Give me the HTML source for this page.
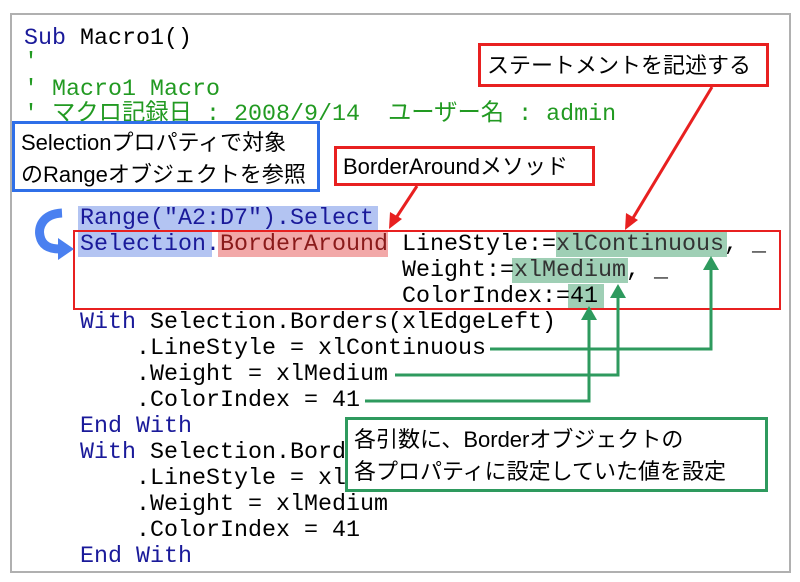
<!DOCTYPE html>
<html><head><meta charset="utf-8"><style>
body{margin:0;width:800px;height:582px;background:#fff;position:relative;overflow:hidden}
.frame{position:absolute;left:10px;top:13px;width:777px;height:556px;border:2px solid #b0b0b0}
.l{position:absolute;left:24px;font:23.33px/26px "Liberation Mono","Noto Sans CJK JP",monospace;white-space:pre;color:#000;letter-spacing:0}
.k{color:#1a1a9a}.c{color:#229a22}
.hl{position:absolute}
.box{position:absolute;background:#fff;font:22px/29px "Liberation Sans","Noto Sans CJK JP",sans-serif;color:#000;white-space:nowrap;box-sizing:border-box;padding:2px 6px}
</style></head><body>
<div class="frame"></div>
<div class="hl" style="left:78px;top:206px;width:300px;height:25px;background:#b3c4f2"></div>
<div class="hl" style="left:78px;top:232px;width:134px;height:25px;background:#b3c4f2"></div>
<div class="hl" style="left:218px;top:232px;width:170px;height:25px;background:#f2a8a8"></div>
<div class="hl" style="left:556px;top:232px;width:171px;height:25px;background:#9fcfb5"></div>
<div class="hl" style="left:512px;top:258px;width:116px;height:25px;background:#9fcfb5"></div>
<div class="hl" style="left:568px;top:284px;width:36px;height:25px;background:#9fcfb5"></div>
<div class="l" style="top:26px"><span class="k">Sub</span> Macro1()</div>
<div class="l c" style="top:50px">'</div>
<div class="l c" style="top:77px">' Macro1 Macro</div>
<div class="l c" style="top:102px">' マクロ記録日 : 2008/9/14  ユーザー名 : admin</div>
<div class="l k" style="top:206px">    Range("A2:D7").Select</div>
<div class="l" style="top:232px"><span class="k">    Selection.</span><span style="color:#8a1a1a">BorderAround</span> LineStyle:=<span style="color:#333">xlContinuous</span>, _</div>
<div class="l" style="top:258px">                           Weight:=<span style="color:#333">xlMedium</span>, _</div>
<div class="l" style="top:284px">                           ColorIndex:=41</div>
<div class="l" style="top:310px"><span class="k">    With</span> Selection.Borders(xlEdgeLeft)</div>
<div class="l" style="top:336px">        .LineStyle = xlContinuous</div>
<div class="l" style="top:362px">        .Weight = xlMedium</div>
<div class="l" style="top:388px">        .ColorIndex = 41</div>
<div class="l k" style="top:414px">    End With</div>
<div class="l" style="top:440px"><span class="k">    With</span> Selection.Borders(xlEdgeTop)</div>
<div class="l" style="top:466px">        .LineStyle = xlContinuous</div>
<div class="l" style="top:492px">        .Weight = xlMedium</div>
<div class="l" style="top:518px">        .ColorIndex = 41</div>
<div class="l k" style="top:544px">    End With</div>
<div style="position:absolute;left:73px;top:230px;width:708px;height:80px;border:2px solid #e82020;box-sizing:border-box"></div>
<svg style="position:absolute;left:0;top:0" width="800" height="582">
<g stroke="#e82020" stroke-width="3" fill="#e82020">
<line x1="417" y1="186" x2="396" y2="218"/><polygon points="389,229 390,212 402,219" stroke="none"/>
<line x1="712" y1="87" x2="633" y2="218"/><polygon points="625,230 626,213 638,220" stroke="none"/>
</g>
<g stroke="#2e9a5e" stroke-width="3" fill="none">
<polyline points="490,349 711,349 711,268"/>
<polyline points="395,375 618,375 618,296"/>
<polyline points="365,401 589,401 589,318"/>
</g>
<g fill="#2e9a5e">
<polygon points="703,270 719,270 711,256"/>
<polygon points="610,298 626,298 618,284"/>
<polygon points="581,320 597,320 589,306"/>
</g>
<path d="M62,213 C42,214 38,228 40,236 C42,246 50,249 60,249" stroke="#4a80f0" stroke-width="9" fill="none"/>
<polygon points="58,238 74,249 58,260" fill="#4a80f0"/>
</svg>
<div class="box" style="left:478px;top:43px;width:291px;height:44px;border:3px solid #e82020;padding-top:5px">ステートメントを記述する</div>
<div class="box" style="left:334px;top:146px;width:261px;height:40px;border:3px solid #e82020;padding-top:3px">BorderAroundメソッド</div>
<div class="box" style="left:12px;top:121px;width:308px;height:71px;border:3px solid #2f6fe8;padding-top:3px;line-height:32px">Selectionプロパティで対象<br>のRangeオブジェクトを参照</div>
<div class="box" style="left:345px;top:417px;width:423px;height:75px;border:3px solid #2e9a5e;padding-top:4px;line-height:32px">各引数に、Borderオブジェクトの<br>各プロパティに設定していた値を設定</div>
</body></html>
